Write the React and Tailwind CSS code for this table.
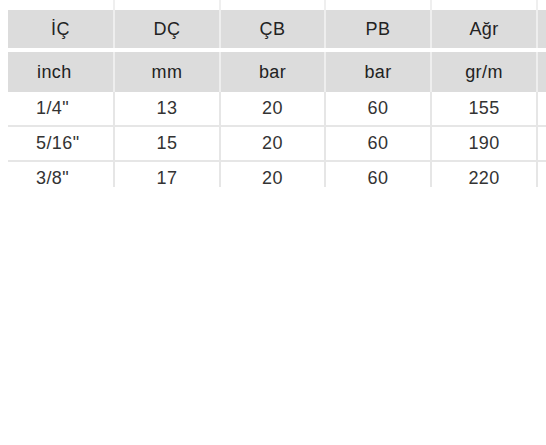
import React from "react";

const widths = ["w-[107px]", "w-[106px]", "w-[105px]", "w-[106px]", "w-[106px]", "w-[60px]"];

const head1 = ["İÇ", "DÇ", "ÇB", "PB", "Ağr", ""];
const head2 = ["inch", "mm", "bar", "bar", "gr/m", ""];
const rows = [
  ['1/4"', "13", "20", "60", "155", ""],
  ['5/16"', "15", "20", "60", "190", ""],
  ['3/8"', "17", "20", "60", "220", ""],
];

function Row({ cells, height, cellClass, first }) {
  return (
    <div className={"flex " + height}>
      {cells.map((c, i) => (
        <div
          key={i}
          className={
            "shrink-0 flex items-center border-r-2 " +
            widths[i] +
            " " +
            cellClass +
            " " +
            (i === 0 && first ? first : "justify-center")
          }
        >
          {c}
        </div>
      ))}
    </div>
  );
}

export default function App() {
  return (
    <div
      className="w-[546px] h-[445px] bg-white overflow-hidden text-[18px] tracking-[0.4px] text-[#333]"
      style={{ fontFamily: '"Liberation Sans", Arial, sans-serif' }}
    >
      <div className="ml-2 w-[700px] h-[187px] overflow-hidden">
        <Row cells={["", "", "", "", "", ""]} height="h-[10px]" cellClass="border-[#efefef]" />
        <Row cells={head1} height="h-[38px]" cellClass="bg-[#dcdcdc] border-[#eeeeee] text-[#222]" />
        <div className="h-[4px]" />
        <Row
          cells={head2}
          height="h-[40px]"
          cellClass="bg-[#dcdcdc] border-[#eeeeee] text-[#222]"
          first="justify-start pl-[29px]"
        />
        {rows.map((r, i) => (
          <div key={i} className="border-b-2 border-[#e6e6e6]">
            <Row
              cells={r}
              height="h-[33px]"
              cellClass="border-[#e6e6e6]"
              first="justify-start pl-[28px]"
            />
          </div>
        ))}
      </div>
    </div>
  );
}
